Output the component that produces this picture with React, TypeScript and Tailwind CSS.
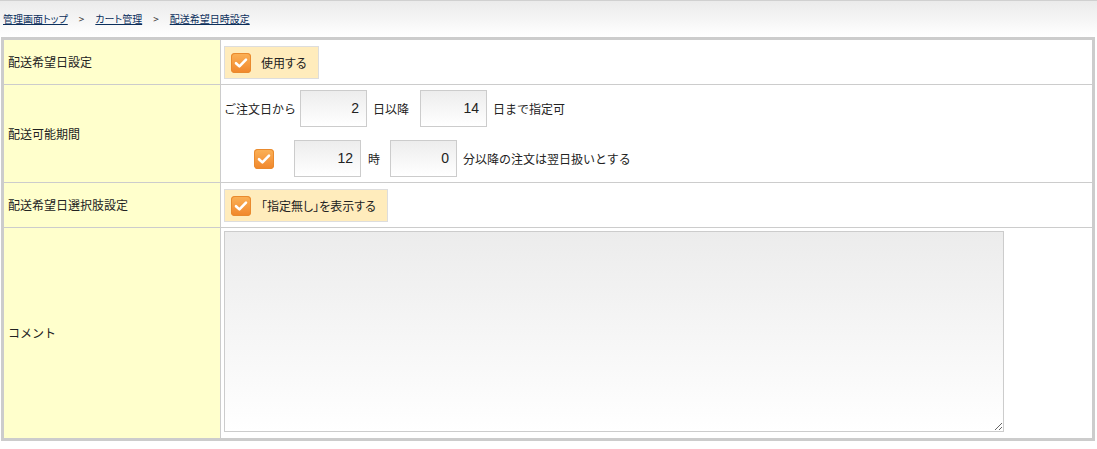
import React from "react";

const jp = "font-['Noto_Sans_CJK_JP','Liberation_Sans',sans-serif]";

const CheckIcon: React.FC = () => (
  <span className="inline-flex h-5 w-5 shrink-0 items-center justify-center rounded-[4px] bg-gradient-to-b from-[#fbb257] to-[#f0862a] shadow-[inset_0_0_0_1px_#e98a2e]">
    <svg width="14" height="12" viewBox="0 0 14 12">
      <path d="M2 6.2 L5.4 9.4 L12 2.6" fill="none" stroke="#fff" strokeWidth="2.6" strokeLinecap="round" strokeLinejoin="round" />
    </svg>
  </span>
);

const NumInput: React.FC<{ value: string; className?: string }> = ({ value, className }) => (
  <div
    className={`flex h-[37px] w-[67px] items-center justify-end border border-[#cccccc] bg-gradient-to-b from-[#ededed] to-white pr-[7px] font-['Liberation_Sans',sans-serif] text-[14px] text-[#222] ${className ?? ""}`}
  >
    {value}
  </div>
);

const CheckLabel: React.FC<{ text: string }> = ({ text }) => (
  <div className="inline-flex h-[33px] items-center gap-[10px] border border-[#dddddd] bg-[#ffecbc] pl-[6px] pr-[11px]">
    <CheckIcon />
    <span className="text-[12px] text-[#222] [font-feature-settings:'palt']">{text}</span>
  </div>
);

export default function App() {
  return (
    <div className={`h-[449px] w-[1097px] bg-white ${jp}`}>
      {/* breadcrumb */}
      <div className="flex h-[37px] items-center border-t border-[#d0d0d0] bg-gradient-to-b from-[#ebebeb] to-white pl-[3px] pb-[2px] text-[10px] text-[#0b2f5c]">
        <a className="underline [font-feature-settings:'palt']">管理画面トップ</a>
        <span className="mx-[11px] text-[#333]">&gt;</span>
        <a className="underline [font-feature-settings:'palt']">カート管理</a>
        <span className="mx-[11px] text-[#333]">&gt;</span>
        <a className="underline">配送希望日時設定</a>
      </div>

      {/* form table */}
      <div className="ml-px w-[1094px] border-[3px] border-[#cccccc] text-[12px] text-[#222]">
        <div className="flex h-[45px] border-b border-[#cccccc]">
          <div className="flex w-[217px] shrink-0 items-center border-r border-[#cccccc] bg-[#ffffcc] pl-[4px]">配送希望日設定</div>
          <div className="flex items-center pl-[3px] pt-px">
            <CheckLabel text="使用する" />
          </div>
        </div>

        <div className="flex h-[98px] border-b border-[#cccccc]">
          <div className="flex w-[217px] shrink-0 items-center border-r border-[#cccccc] bg-[#ffffcc] pl-[4px]">配送可能期間</div>
          <div className="flex flex-col gap-[13px] pl-[3px] pt-[5px]">
            <div className="flex items-center">
              <span>ご注文日から</span>
              <NumInput value="2" className="ml-[4px]" />
              <span className="ml-[6px]">日以降</span>
              <NumInput value="14" className="ml-[11px]" />
              <span className="ml-[6px]">日まで指定可</span>
            </div>
            <div className="flex items-center pl-[30px]">
              <CheckIcon />
              <NumInput value="12" className="ml-[20px]" />
              <span className="ml-[7px]">時</span>
              <NumInput value="0" className="ml-[10px] text-[#5a1a6e]" />
              <span className="ml-[6px]">分以降の注文は翌日扱いとする</span>
            </div>
          </div>
        </div>

        <div className="flex h-[45px] border-b border-[#cccccc]">
          <div className="flex w-[217px] shrink-0 items-center border-r border-[#cccccc] bg-[#ffffcc] pl-[4px]">配送希望日選択肢設定</div>
          <div className="flex items-center pl-[3px] pt-px">
            <CheckLabel text="「指定無し」を表示する" />
          </div>
        </div>

        <div className="flex h-[210px]">
          <div className="flex w-[217px] shrink-0 items-center border-r border-[#cccccc] bg-[#ffffcc] pl-[4px]">コメント</div>
          <div className="pl-[3px] pt-[3px]">
            <textarea className="block h-[201px] w-[780px] border border-[#cccccc] bg-gradient-to-b from-[#ececec] to-white outline-none" />
          </div>
        </div>
      </div>
    </div>
  );
}
